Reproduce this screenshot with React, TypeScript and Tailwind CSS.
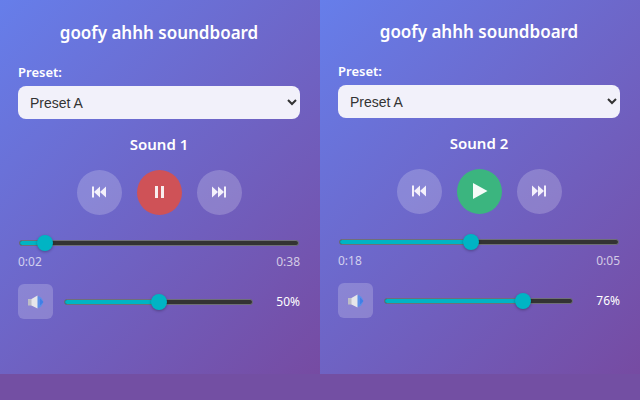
function SkipIcon({ flip }: { flip?: boolean }) {
  return (
    <svg viewBox="0 0 16 14" className={`w-[16px] h-[14px] ${flip ? '' : '-scale-x-100'}`} fill="#f4f1fb">
      <rect x="1" y="1.5" width="2" height="11" />
      <path d="M9 1.5v11L3 7z" />
      <path d="M15 1.5v11L9 7z" />
    </svg>
  );
}

function SpeakerIcon() {
  return (
    <svg viewBox="0 0 16 14" className="w-[16px] h-[14px]">
      <path d="M9 1a6 6 0 0 1 0 12z" fill="#5b8fe8" />
      <path d="M12 3.5l3.5 3.5-3.5 3.5z" fill="#3f7fe6" />
      <rect x="0" y="4" width="4" height="6.5" fill="#bdbdc6" />
      <path d="M3.5 4l6-3.5v13l-6-3z" fill="#e6e6ea" />
    </svg>
  );
}

function Slider({ value, className }: { value: number; className: string }) {
  // thumb stays inside the track, like a native range input
  const pos = `calc(8px + ${value / 100} * (100% - 16px))`;
  return (
    <div className={`relative h-[6px] rounded-full bg-[#333] border border-[#6f6f78] ${className}`}>
      <div className="h-full rounded-full bg-[#00b4c4]" style={{ width: pos }} />
      <div
        className="absolute top-1/2 w-[16px] h-[16px] -translate-x-1/2 -translate-y-1/2 rounded-full bg-[#00b4c4] shadow-[0_1px_3px_rgba(0,0,0,0.3)]"
        style={{ left: pos }}
      />
    </div>
  );
}

interface PlayerProps {
  name: string;
  playing: boolean;
  progress: number;
  current: string;
  remaining: string;
  volume: number;
  className: string;
}

function Player({ name, playing, progress, current, remaining, volume, className }: PlayerProps) {
  return (
    <div className={`w-[320px] h-[374px] pl-[18px] pr-[20px] bg-[linear-gradient(135deg,#667eea_0%,#764ba2_100%)] text-white ${className}`}>
      <h1 className="text-[17px] leading-[24px] font-semibold text-center">goofy ahhh soundboard</h1>

      <label className="block mt-[18px] text-[13px] leading-[18px] font-semibold">Preset:</label>
      <select className="block mt-[5px] w-full h-[33px] pl-[8px] rounded-[8px] bg-[#f2f1fa] text-[#333] text-[14px] font-['Liberation_Sans',sans-serif]">
        <option>Preset A</option>
        <option>Preset B</option>
      </select>

      <h2 className="mt-[15px] text-[15px] leading-[20px] font-semibold text-center">{name}</h2>

      <div className="mt-[15.5px] flex justify-center gap-[15px]">
        <button className="w-[45px] h-[45px] rounded-full bg-white/20 flex items-center justify-center">
          <SkipIcon flip />
        </button>
        {playing ? (
          <button className="w-[45px] h-[45px] rounded-full bg-[#cf5257] flex items-center justify-center gap-[3px]">
            <span className="w-[3px] h-[12px] bg-[#f8eeee]" />
            <span className="w-[3px] h-[12px] bg-[#f8eeee]" />
          </button>
        ) : (
          <button className="w-[45px] h-[45px] rounded-full bg-[#3bb57f] flex items-center justify-center">
            <svg viewBox="0 0 16 18" className="w-[16px] h-[18px] ml-[1px]" fill="#f5fbf8">
              <path d="M1 1v16L15.5 9z" />
            </svg>
          </button>
        )}
        <button className="w-[45px] h-[45px] rounded-full bg-white/20 flex items-center justify-center">
          <SkipIcon />
        </button>
      </div>

      <Slider value={progress} className="mt-[25.5px] ml-[1px] mr-[1px]" />

      <div className="mt-[8px] flex justify-between text-[12px] leading-[16px] text-white/70">
        <span>{current}</span>
        <span>{remaining}</span>
      </div>

      <div className="mt-[14px] flex items-center">
        <button className="w-[35px] h-[35px] rounded-[6px] bg-white/20 flex items-center justify-center">
          <SpeakerIcon />
        </button>
        <Slider value={volume} className="ml-[11px] w-[189px]" />
        <span className="ml-auto text-[12px] leading-[16px]">{volume}%</span>
      </div>
    </div>
  );
}

export default function App() {
  return (
    <div className="w-[640px] h-[400px] flex items-start overflow-hidden bg-[#734fa3] font-['Noto_Sans',sans-serif]">
      <Player name="Sound 1" playing progress={6.5} current="0:02" remaining="0:38" volume={50} className="pt-[21px]" />
      <Player name="Sound 2" playing={false} progress={47} current="0:18" remaining="0:05" volume={76} className="pt-[20px]" />
    </div>
  );
}
